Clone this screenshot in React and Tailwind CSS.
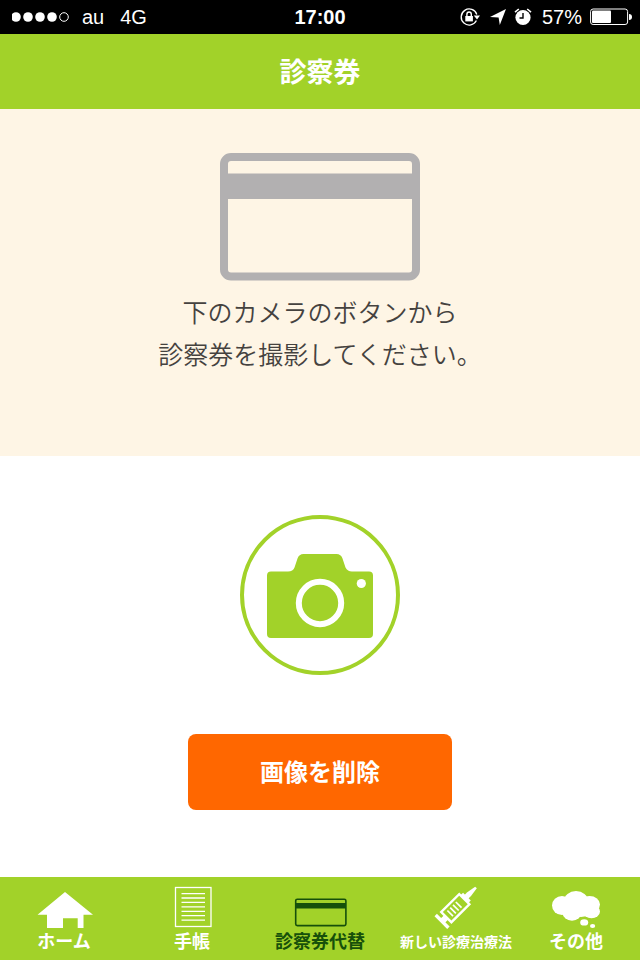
import { useState } from 'react';

const HomeIcon = () => (
    <svg viewBox="0 0 60 44" className="w-15 h-11" fill="currentColor" aria-hidden="true">
        <path d="M31 6 L59 28.7 H49.5 V42 H43.7 V32.3 H29 V42 H13 V28.7 H3.5 Z" />
    </svg>
);

const NotebookIcon = () => (
    <svg viewBox="0 0 60 44" className="w-15 h-11" fill="none" stroke="currentColor" aria-hidden="true">
        <rect x="13.5" y="1.5" width="35.5" height="39" strokeWidth="1.3" />
        <path d="M19.5 7.7h23.5M19.5 12h23.5M19.5 16.4h23.5M19.5 20.8h23.5M19.5 25.3h23.5M19.5 29.7h23.5M19.5 34.1h23.5" strokeWidth="1.3" />
    </svg>
);

const CardIcon = () => (
    <svg viewBox="0 0 60 44" className="w-15 h-11" fill="none" stroke="currentColor" aria-hidden="true">
        <rect x="5.7" y="13.2" width="50.2" height="26.4" rx="1.6" strokeWidth="1.6" />
        <path d="M5.7 19.8h50.2" strokeWidth="5.4" />
    </svg>
);

const SyringeIcon = () => (
    <svg viewBox="0 0 60 44" className="w-15 h-11" fill="none" stroke="currentColor" aria-hidden="true">
        <g transform="translate(15 36.5) rotate(-45)">
            <path d="M1.5 -9V9" strokeWidth="3.4" />
            <path d="M1.5 0H8" strokeWidth="6" />
            <rect x="7.5" y="-7.2" width="25.5" height="14.4" strokeWidth="2.4" />
            <path d="M13 -4V4M17 -4V4M21 -4V4M25 -4V4" strokeWidth="1.7" />
            <path d="M35 -5.5V5.5" strokeWidth="3.4" />
            <path d="M36 -2.8H40L49.5 -1.2V1.2L40 2.4H36Z" fill="currentColor" stroke="none" />
        </g>
    </svg>
);

const CloudIcon = () => (
    <svg viewBox="0 0 60 44" className="w-15 h-11" fill="currentColor" aria-hidden="true">
        <ellipse cx="16" cy="19.5" rx="10" ry="9.5" />
        <ellipse cx="30" cy="15" rx="12" ry="10" />
        <ellipse cx="43.5" cy="18.5" rx="10.5" ry="8.5" />
        <ellipse cx="26" cy="26.5" rx="9.5" ry="8.3" />
        <ellipse cx="45.5" cy="25.5" rx="8.5" ry="6.8" />
        <ellipse cx="35" cy="22" rx="13" ry="9" />
        <ellipse cx="38.2" cy="36.4" rx="4" ry="3.2" />
        <ellipse cx="46.6" cy="40" rx="2.6" ry="2.1" />
    </svg>
);

const navItems = [
    { id: 'home', icon: HomeIcon, label: 'ホーム' },
    { id: 'notebook', icon: NotebookIcon, label: '手帳' },
    { id: 'card', icon: CardIcon, label: '診察券代替' },
    { id: 'therapy', icon: SyringeIcon, label: '新しい診療治療法', long: true },
    { id: 'other', icon: CloudIcon, label: 'その他' },
];

function StatusBar() {
    return (
        <div className="grid grid-cols-3 items-center h-[34px] px-2 bg-black text-white text-xl">
            <div className="flex items-center">
                <svg viewBox="0 0 60 12" className="w-15 h-3 ml-1" aria-hidden="true">
                    <g fill="#fff">
                        <circle cx="4" cy="6" r="4.8" />
                        <circle cx="16" cy="6" r="4.8" />
                        <circle cx="28" cy="6" r="4.8" />
                        <circle cx="40" cy="6" r="4.8" />
                    </g>
                    <circle cx="52" cy="6" r="4.3" fill="none" stroke="#fff" />
                </svg>
                <span className="ml-2.5">au</span>
                <span className="ml-4">4G</span>
            </div>
            <div className="text-center font-bold">17:00</div>
            <div className="flex items-center justify-end">
                <svg viewBox="0 0 20 20" className="w-5 h-5" aria-hidden="true">
                    <path d="M16.4 13.5A8 8 0 1 1 16.8 7.5" fill="none" stroke="#fff" strokeWidth="1.3" />
                    <path d="M13.8 8.5H20L17 12.5Z" fill="#fff" />
                    <rect x="5.3" y="9" width="7.6" height="5.4" fill="#fff" />
                    <path d="M6.9 9V7.2a2.2 2.2 0 0 1 4.4 0V9" fill="none" stroke="#fff" strokeWidth="1.4" />
                </svg>
                <svg viewBox="0 0 16 16" className="w-4 h-4 ml-2.5" fill="#fff" aria-hidden="true">
                    <path d="M16 0L9.8 16L8.6 8.6L0 8Z" />
                </svg>
                <svg viewBox="0 0 18 18" className="w-[18px] h-[18px] ml-2" aria-hidden="true">
                    <circle cx="9" cy="9.5" r="7.6" fill="#fff" />
                    <path d="M9 5V10H5.5" fill="none" stroke="#000" strokeWidth="1.4" />
                    <path d="M1 4.2L4.8 1M13.2 1L17 4.2" stroke="#fff" strokeWidth="1.6" />
                </svg>
                <span className="ml-2.5">57%</span>
                <svg viewBox="0 0 42 18" className="w-[42px] h-[18px] ml-2" aria-hidden="true">
                    <rect x="0.6" y="1" width="37" height="15.5" rx="2.5" fill="none" stroke="#fff" strokeWidth="1" />
                    <rect x="2" y="2.5" width="19" height="12.5" rx="1" fill="#fff" />
                    <path d="M39 6a3 3 0 0 1 0 6Z" fill="#fff" />
                </svg>
            </div>
        </div>
    );
}

export default function App() {
    const [active, setActive] = useState('card');

    return (
        <div className="flex flex-col min-h-screen bg-white font-['Liberation_Sans','Noto_Sans_CJK_JP',sans-serif]">
            <StatusBar />

            <header className="flex items-center justify-center h-[75px] pt-1 bg-[#a2d229]">
                <h1 className="text-[27px] font-bold text-white">診察券</h1>
            </header>

            <main className="flex-1">
                {/* Card preview */}
                <section className="flex flex-col items-center pt-11 pb-20 bg-[#fef5e5]">
                    <svg viewBox="0 0 200 128" className="w-[200px] h-32" aria-hidden="true">
                        <rect x="4" y="4" width="192" height="119.5" rx="7" fill="none" stroke="#b2b0b1" strokeWidth="8" />
                        <path d="M4 20.5H196V46H4Z" fill="#b2b0b1" />
                    </svg>
                    <p className="mt-[11px] text-center text-[25px] leading-[42px] font-[350] text-[#45423f]">
                        下のカメラのボタンから<br />
                        診察券を撮影してください。
                    </p>
                </section>

                {/* Actions */}
                <section className="flex flex-col items-center gap-[59px] pt-[59px]">
                    <button type="button" aria-label="カメラ" className="rounded-full">
                        <svg viewBox="0 0 160 160" className="w-40 h-40" aria-hidden="true">
                            <circle cx="80" cy="80" r="78" fill="#fff" stroke="#a2d229" strokeWidth="4" />
                            <path
                                d="M31 56.5H48Q53 56.5 54.5 52.5L57.5 43.5Q59 39 63.5 39H96.5Q101 39 102.5 43.5L105.5 52.5Q107.5 56.5 112 56.5H129Q133 56.5 133 60.5V119Q133 123 129 123H31Q27 123 27 119V60.5Q27 56.5 31 56.5Z"
                                fill="#a2d229"
                            />
                            <circle cx="80" cy="88" r="21.2" fill="none" stroke="#fff" strokeWidth="6" />
                            <circle cx="121.3" cy="68.5" r="4.6" fill="#fff" />
                        </svg>
                    </button>
                    <button type="button" className="w-[264px] h-[76px] pt-0.5 rounded-lg bg-[#ff6700] text-2xl font-bold text-white">
                        画像を削除
                    </button>
                </section>
            </main>

            {/* Tab bar */}
            <nav className="grid grid-cols-5 pt-[9px] pb-1.5 bg-[#a2d229]">
                {navItems.map(({ id, icon: Icon, label, long }) => (
                    <button
                        key={id}
                        type="button"
                        onClick={() => setActive(id)}
                        className={`flex flex-col items-center font-bold whitespace-nowrap ${long ? 'pl-4 text-sm' : 'text-lg'} ${active === id ? 'text-[#16500a]' : 'text-white'}`}
                    >
                        <Icon />
                        <span className="leading-6">{label}</span>
                    </button>
                ))}
            </nav>
        </div>
    );
}
